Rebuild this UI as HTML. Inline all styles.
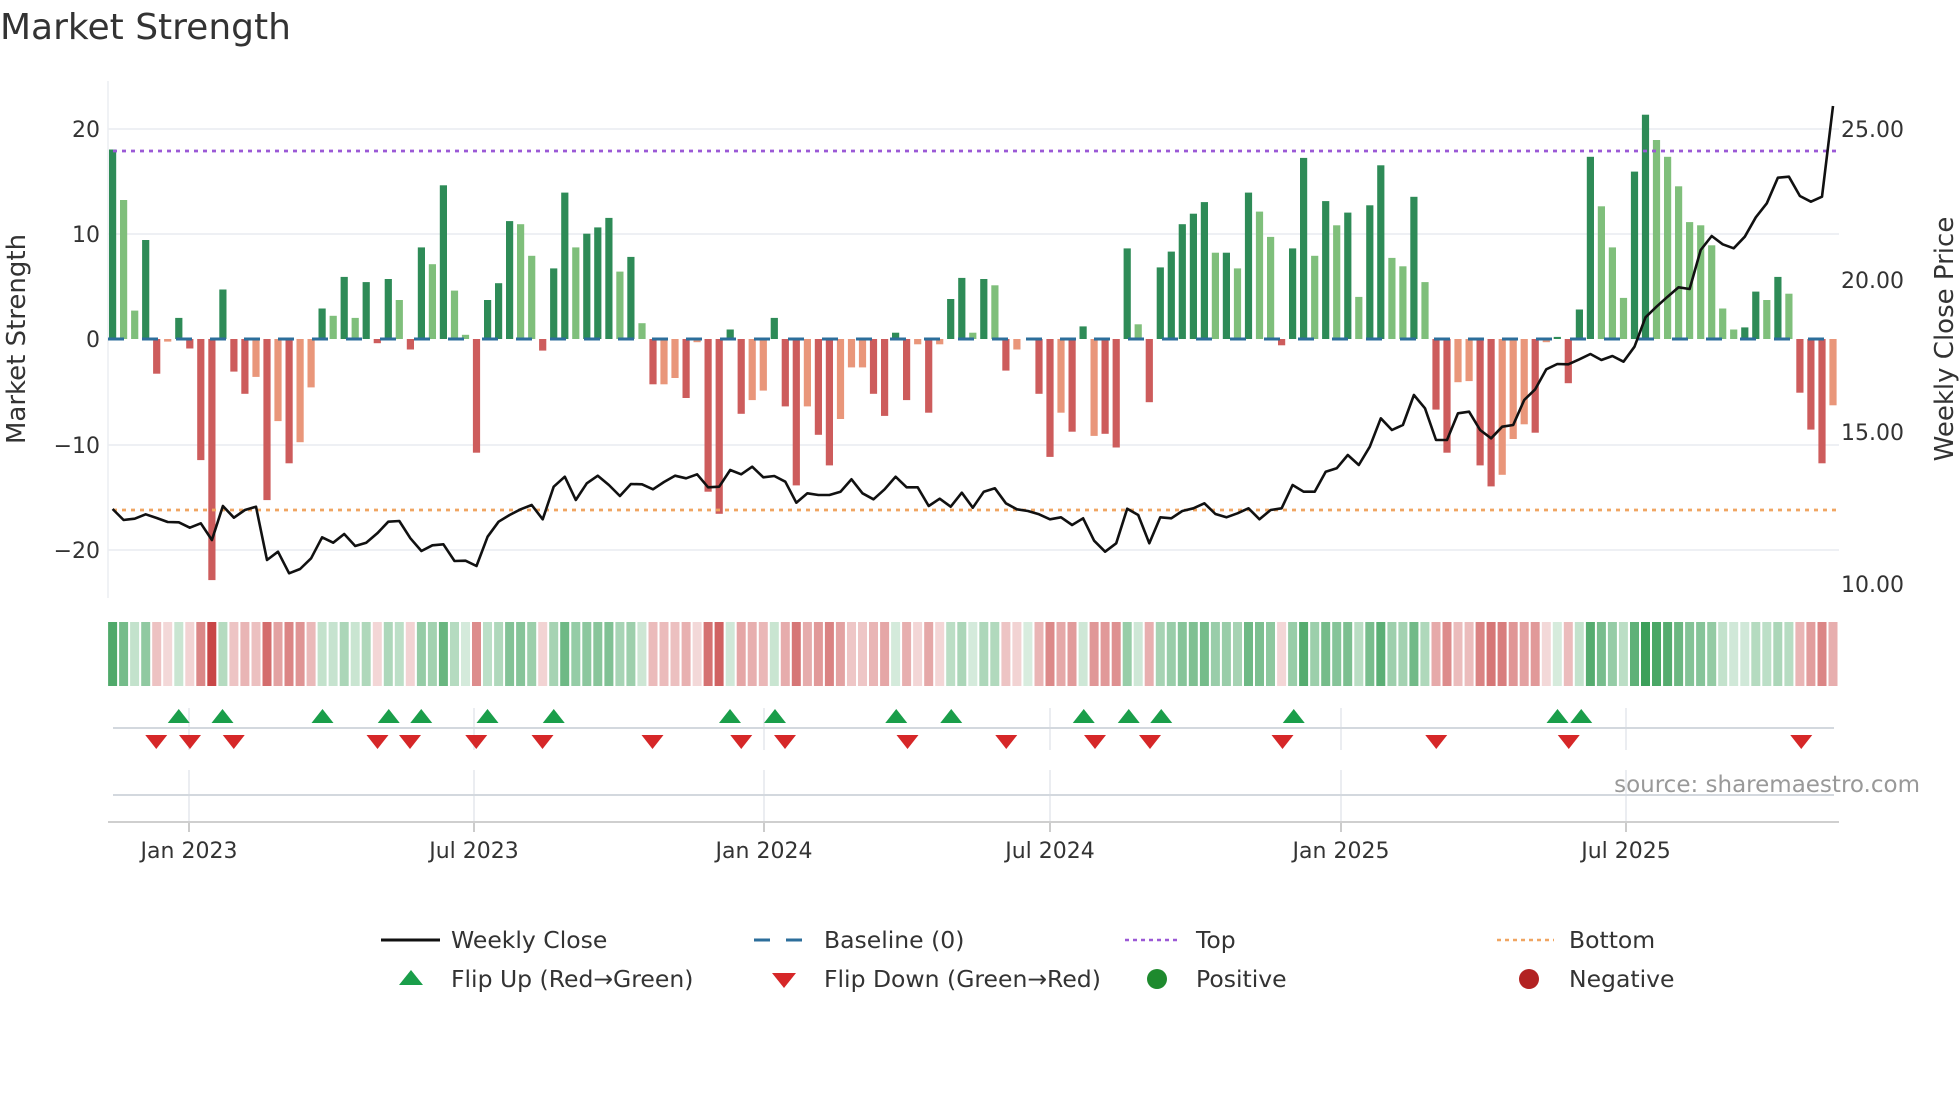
<!DOCTYPE html>
<html><head><meta charset="utf-8">
<style>
html,body{margin:0;padding:0;background:#fff;width:1960px;height:1102px;overflow:hidden;}
svg text{font-family:"DejaVu Sans","Liberation Sans",sans-serif;}
</style></head>
<body>
<svg id="s" width="1960" height="1102" xmlns="http://www.w3.org/2000/svg">
<text x="0" y="39" font-size="36" fill="#333">Market Strength</text>
</svg>
<script>
var S=document.getElementById('s');var out='';
function R(x,y,w,h,c,extra){out+='<rect x="'+x.toFixed(1)+'" y="'+y.toFixed(1)+'" width="'+w.toFixed(1)+'" height="'+h.toFixed(1)+'" fill="'+c+'" '+(extra||'')+'/>';}
function L(x1,y1,x2,y2,c,w,extra){out+='<line x1="'+x1+'" y1="'+y1+'" x2="'+x2+'" y2="'+y2+'" stroke="'+c+'" stroke-width="'+w+'" '+(extra||'')+'/>';}
function T(x,y,t,sz,c,anch,extra){out+='<text x="'+x+'" y="'+y+'" font-size="'+sz+'" fill="'+c+'" text-anchor="'+(anch||'start')+'" '+(extra||'')+'>'+t+'</text>';}
var v1=[18,13.2,2.7,9.4,-3.3,-0.25,2,-0.9,-11.5,-22.9,4.7,-3.1,-5.2,-3.6,-15.3,-7.8,-11.8,-9.8,-4.6,2.9,2.2,5.9,2,5.4,-0.4,5.7,3.7,-1,8.7,7.1,14.6,4.6,0.4,-10.8,3.7,5.3,11.2,10.9,7.9,-1.1,6.7,13.9,8.7,10,10.6,11.5,6.4,7.8,1.5,-4.3,-4.3,-3.7,-5.6,-0.3,-14.5,-16.6,0.9,-7.1,-5.8,-4.9,2,-6.4,-13.9,-6.4,-9.1,-12,-7.6,-2.7,-2.7,-5.2,-7.3,0.6,-5.8,-0.5,-7,-0.5,3.8,5.8,0.6,5.7,5.1];
var f1=("dllddldddd"+"dddldldlld"+"ldldddlddl"+"dllddddlld"+"ddldddldld"+"lldlddddll"+"dddlddllld"+"dddldlddldl").split('');
var v2=[-3,-1,0,-5.2,-11.2,-7,-8.8,1.2,-9.2,-9,-10.3,8.6,1.4,-6,6.8,8.3,10.9,11.9,13,8.2,8.2,6.7,13.9,12.1,9.7,-0.6,8.6,17.2,7.9,13.1,10.8,12,4,12.7,16.5,7.7,6.9,13.5,5.4,-6.7,-10.8,-4.1,-4,-12,-14,-12.9,-9.5,-8.1,-8.9,-0.3,0.2,-4.2,2.8,17.3,12.6,8.7,3.9,15.9,21.3,18.9,17.3,14.5,11.1,10.8,8.9,2.9,0.9,1.1,4.5,3.7,5.9,4.3,-5.1,-8.6,-11.8,-6.3];
var f2=("dldddlddld"+"ddlddddddl"+"dldlldddld"+"ldlddlldld"+"dllddllldl"+"ddddlllddl"+"lllllllddl"+"dldddl").split('');
var V=v1.concat(v2);var F=[];for(var i=0;i<81;i++)F.push(f1[i]||'d');for(var i=0;i<v2.length;i++)F.push(f2[i]||'d');
var p1=[1287,1320,1316,1303,1314,1326,1327,1343,1330,1380,1278,1313,1290,1280,1440,1415,1480,1467,1435,1372,1388,1362,1398,1388,1360,1325,1323,1375,1413,1396,1393,1443,1442,1458,1370,1325,1305,1288,1275,1318,1220,1190,1260,1210,1187,1215,1248,1212,1213,1228,1206,1187,1195,1183,1222,1220,1170,1183,1160,1192,1188,1205,1268,1240,1245,1245,1235,1198,1240,1258,1228,1190,1222,1222,1278,1256,1280,1238,1283,1235,1225];
var p2=[1270,1288,1293,1303,1318,1312,1335,1315,1382,1415,1390,1286,1305,1390,1312,1315,1293,1285,1270,1302,1312,1300,1285,1318,1290,1285,1215,1235,1235,1175,1165,1125,1155,1100,1015,1050,1035,945,985,1080,1080,1000,995,1050,1075,1040,1035,960,928,868,852,853,838,822,840,828,845,800,712,680,650,622,627,510,468,493,505,470,412,370,293,290,348,365,350,78];
var P=p1.concat(p2);
var X0=112.6,DX=(1833-112.6)/156;
function bx(i){return X0+i*DX;}
var Z=339,U=10.53;
[129,234,445,550].forEach(function(y){L(108,y,1839,y,'#eef0f4',2);});
L(108,81,108,598,'#eceef2',1.5);
for(var i=0;i<V.length;i++){var v=V[i];if(Math.abs(v)<0.05)continue;var h=Math.abs(v)*U;var c=v>0?(F[i]=='d'?'#2e8b57':'#7fbf7b'):(F[i]=='d'?'#cd5c5c':'#e9967a');R(bx(i)-3.6,v>0?Z-h:Z,7.2,h,c);}
L(108,Z,1839,Z,'#2c6e9b',3,'stroke-dasharray="16 18"');
L(113,151,1836,151,'#9b59d6',2.8,'stroke-dasharray="4 5"');
L(113,510,1836,510,'#f0a561',2.8,'stroke-dasharray="4 5"');
var pts=[];for(var i=0;i<P.length;i++)pts.push(bx(i).toFixed(1)+','+(80+P[i]/3).toFixed(1));
out+='<polyline points="'+pts.join(' ')+'" fill="none" stroke="#111" stroke-width="2.6" stroke-linejoin="round"/>';
[['20',129],['10',234],['0',339],['\u221210',445],['\u221220',550]].forEach(function(a){T(100,a[1]+8,a[0],22,'#333','end');});
[['25.00',129],['20.00',280],['15.00',432],['10.00',584]].forEach(function(a){T(1841,a[1]+8,a[0],22,'#333');});
T(0,0,'Market Strength',26,'#333','middle','transform="translate(25,339) rotate(-90)"');
T(0,0,'Weekly Close Price',26,'#333','middle','transform="translate(1953,339) rotate(-90)"');
for(var i=0;i<V.length;i++){var v=V[i];var a=Math.min(1,0.2+Math.abs(v)/18*0.7);var c=v>=0?'rgba(60,160,90,'+a.toFixed(2)+')':'rgba(200,70,70,'+a.toFixed(2)+')';R(bx(i)-DX/2+1,622,DX-2,64,c);}
var ticks=[[189,'Jan 2023'],[474,'Jul 2023'],[764,'Jan 2024'],[1050,'Jul 2024'],[1341,'Jan 2025'],[1626,'Jul 2025']];
ticks.forEach(function(t){L(t[0],708,t[0],750,'#e4e7ec',1.5);L(t[0],770,t[0],822,'#e4e7ec',1.5);L(t[0],822,t[0],832,'#bbb',1.5);T(t[0],858,t[1],22,'#333','middle');});
L(113,728,1834,728,'#d3d8de',2);L(113,795,1834,795,'#d3d8de',2);L(108,822,1839,822,'#cfcfcf',2);
var up=[143,178,258,311,337,390,443,584,620,717,761,867,903,929,1035,1246,1265];
var dn=[125,152,187,302,328,381,434,522,593,628,726,805,876,920,1026,1149,1255,1441];
up.forEach(function(x){x*=1.25;out+='<polygon points="'+(x-11)+',723 '+(x+11)+',723 '+x+',709" fill="#1a9e4a"/>';});
dn.forEach(function(x){x*=1.25;out+='<polygon points="'+(x-11)+',735 '+(x+11)+',735 '+x+',749" fill="#d62728"/>';});
T(1920,792,'source: sharemaestro.com',23,'#999','end');
var ly1=940,ly2=979;
L(381,ly1,440,ly1,'#111',3);T(451,ly1+8,'Weekly Close',23.5,'#333');
L(754,ly1,809,ly1,'#2c6e9b',3,'stroke-dasharray="16 16"');T(824,ly1+8,'Baseline (0)',23.5,'#333');
L(1125,ly1,1181,ly1,'#9b59d6',2.5,'stroke-dasharray="4 4"');T(1196,ly1+8,'Top',23.5,'#333');
L(1497,ly1,1554,ly1,'#f0a561',2.5,'stroke-dasharray="4 4"');T(1569,ly1+8,'Bottom',23.5,'#333');
out+='<polygon points="399,985 423,985 411,970" fill="#1a9e4a"/>';T(451,ly2+8,'Flip Up (Red\u2192Green)',23.5,'#333');
out+='<polygon points="772,973 796,973 784,988" fill="#d62728"/>';T(824,ly2+8,'Flip Down (Green\u2192Red)',23.5,'#333');
out+='<circle cx="1157" cy="979" r="10" fill="#1e8a2e"/>';T(1196,ly2+8,'Positive',23.5,'#333');
out+='<circle cx="1529" cy="979" r="10" fill="#b22222"/>';T(1569,ly2+8,'Negative',23.5,'#333');
S.insertAdjacentHTML('beforeend',out);
</script>
</body></html>
